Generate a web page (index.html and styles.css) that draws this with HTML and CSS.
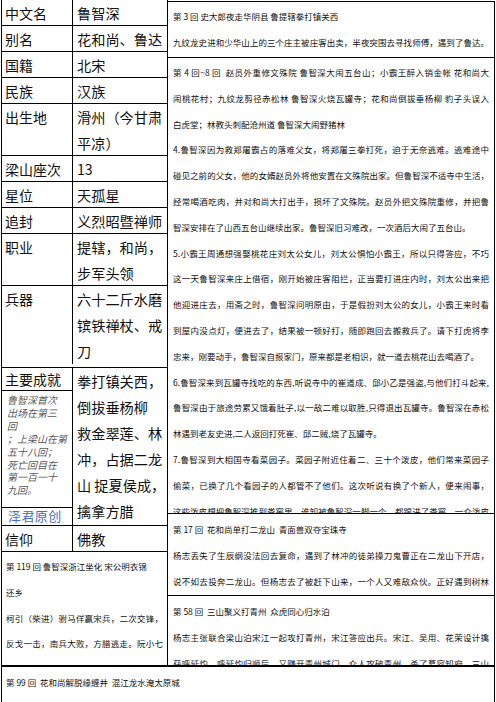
FILE: index.html
```html
<!DOCTYPE html>
<html lang="zh-CN">
<head>
<meta charset="utf-8">
<title>鲁智深</title>
<link rel="stylesheet" href="styles.css">
</head>
<body>
<div class="sheet">
  <div class="top">
    <div class="left">
      <div class="info">
        <div class="row"><div class="k">中文名</div><div class="v">鲁智深</div></div>
        <div class="row"><div class="k">别名</div><div class="v">花和尚、鲁达</div></div>
        <div class="row"><div class="k">国籍</div><div class="v">北宋</div></div>
        <div class="row"><div class="k">民族</div><div class="v">汉族</div></div>
        <div class="row"><div class="k">出生地</div><div class="v">滑州（今甘肃<br>平凉）</div></div>
        <div class="row"><div class="k">梁山座次</div><div class="v">13</div></div>
        <div class="row"><div class="k">星位</div><div class="v">天孤星</div></div>
        <div class="row"><div class="k">追封</div><div class="v">义烈昭暨禅师</div></div>
        <div class="row"><div class="k">职业</div><div class="v">提辖，和尚，<br>步军头领</div></div>
        <div class="row row-weapon"><div class="k">兵器</div><div class="v">六十二斤水磨<br>镔铁禅杖、戒<br>刀</div></div>
        <div class="row row-ach">
          <div class="k k-ach">
            <div class="ach-title">主要成就</div>
            <div class="note">鲁智深首次<br>出场在第三<br>回<br>；上梁山在第<br>五十八回；<br>死亡回目在<br>第一百一十<br>九回。</div>
            <div class="brand">泽君原创</div>
          </div>
          <div class="v">拳打镇关西，<br>倒拔垂杨柳<br>救金翠莲、林<br>冲，占据二龙<br>山 捉夏侯成，<br>擒拿方腊</div>
        </div>
        <div class="row"><div class="k">信仰</div><div class="v">佛教</div></div>
      </div>
      <div class="box box-f">
        <div class="ln">第 119 回 鲁智深浙江坐化 宋公明衣锦</div>
        <div class="ln">还乡</div>
        <div class="ln j">柯引（柴进）驸马佯赢宋兵，二次交锋，</div>
        <div class="ln j">反戈一击，南兵大败，方腊逃走。阮小七</div>
      </div>
    </div>
    <div class="right">
      <div class="box box-a">
        <div class="ln">第 3 回 史大郎夜走华阴县 鲁提辖拳打镇关西</div>
        <div class="ln j">九纹龙史进和少华山上的三个庄主被庄客出卖，半夜突围去寻找师傅，遇到了鲁达。</div>
      </div>
      <div class="box box-b">
        <div class="ln j">第 4 回~8 回&nbsp; 赵员外重修文殊院 鲁智深大闹五台山；小霸王醉入销金帐 花和尚大</div>
        <div class="ln j">闹桃花村；九纹龙剪径赤松林 鲁智深火烧瓦罐寺；花和尚倒拔垂杨柳 豹子头误入</div>
        <div class="ln">白虎堂；林教头刺配沧州道 鲁智深大闹野猪林</div>
        <div class="ln j">4.鲁智深因为救郑屠霸占的落难父女，将郑屠三拳打死，迫于无奈逃难。逃难途中</div>
        <div class="ln j">碰见之前的父女，他的女婿赵员外将他安置在文殊院出家。但鲁智深不适寺中生活，</div>
        <div class="ln j">经常喝酒吃肉，并对和尚大打出手，损坏了文殊院。赵员外把文殊院重修，并把鲁</div>
        <div class="ln">智深安排在了山西五台山继续出家。鲁智深旧习难改，一次酒后大闹了五台山。</div>
        <div class="ln j">5.小霸王周通想强娶桃花庄刘太公女儿，刘太公惧怕小霸王，所以只得答应，不巧</div>
        <div class="ln j">这一天鲁智深来庄上借宿，刚开始被庄客阻拦，正当要打进庄内时，刘太公出来把</div>
        <div class="ln j">他迎进庄去，用斋之时，鲁智深问明原由，于是假扮刘太公的女儿，小霸王来时看</div>
        <div class="ln j">到屋内没点灯，便进去了，结果被一顿好打，随即跑回去搬救兵了。请下打虎将李</div>
        <div class="ln">忠来，刚要动手，鲁智深自报家门，原来都是老相识，就一道去桃花山去喝酒了。</div>
        <div class="ln j">6.鲁智深来到瓦罐寺找吃的东西,听说寺中的崔道成、邱小乙是强盗,与他们打斗起来,</div>
        <div class="ln j">鲁智深由于旅途劳累又饿着肚子,以一敌二难以取胜,只得退出瓦罐寺。鲁智深在赤松</div>
        <div class="ln">林遇到老友史进,二人返回打死崔、邱二贼,烧了瓦罐寺。</div>
        <div class="ln j">7.鲁智深到大相国寺看菜园子。菜园子附近住着二、三十个泼皮，他们常来菜园子</div>
        <div class="ln j">偷菜，已换了几个看园子的人都管不了他们。这次听说有换了个新人，便来闹事，</div>
        <div class="ln j">这些泼皮想把鲁智深推到粪窖里，谁知被鲁智深一脚一个，都踢进了粪窖，一众泼皮</div>
      </div>
      <div class="box box-c">
        <div class="ln">第 17 回&nbsp; 花和尚单打二龙山&nbsp; 青面兽双夺宝珠寺</div>
        <div class="ln j">杨志丢失了生辰纲没法回去复命，遇到了林冲的徒弟操刀鬼曹正在二龙山下开店，</div>
        <div class="ln j">说不如去投奔二龙山。但杨志去了被赶下山来，一个人又难敌众伙。正好遇到树林</div>
      </div>
      <div class="box box-d">
        <div class="ln">第 58 回&nbsp; 三山聚义打青州&nbsp; 众虎同心归水泊</div>
        <div class="ln j">杨志主张联合梁山泊宋江一起攻打青州，宋江答应出兵。宋江、吴用、花荣设计擒</div>
        <div class="ln j">获呼延灼，呼延灼归顺后，又赚开青州城门，众人攻破青州，杀了慕容知府，三山</div>
      </div>
    </div>
  </div>
  <div class="box box-e">
    <div class="ln">第 99 回&nbsp; 花和尚解脱缘缠井&nbsp; 混江龙水淹太原城</div>
  </div>
</div>
</body>
</html>
```

FILE: styles.css
```css
* {
  box-sizing: border-box;
  margin: 0;
  padding: 0;
}

html,
body {
  background: #fff;
}

body {
  margin: 0;
  overflow: hidden;
  font-family: "Noto Sans CJK SC", "Noto Sans", sans-serif;
  color: #111;
}

.sheet {
  width: 494px;
  height: 702px;
  margin-left: 1px;
  overflow: hidden;
}

.top {
  display: flex;
  align-items: flex-start;
}

.left {
  width: 167px;
  flex: none;
}

.right {
  flex: 1;
  margin-left: -1px;
  margin-top: 1px;
}

/* ---------- info table ---------- */
.info {
  border-left: 1px solid #000;
  border-right: 1px solid #000;
}

.row {
  display: grid;
  grid-template-columns: 71px 1fr;
  font-size: 14px;
  line-height: 26px;
  box-shadow: inset 0 -1px 0 #000;
}

.k {
  border-right: 1px solid #000;
  padding-left: 3px;
  white-space: nowrap;
}

.v {
  padding-left: 4px;
  font-size: 14.2px;
  white-space: nowrap;
}

.row-weapon {
  padding-bottom: 4px;
}

.row-ach {
  height: 158px;
}

.k-ach {
  padding-left: 0;
}

.ach-title {
  padding-left: 3px;
  line-height: 22px;
}

.note {
  height: 118px;
  border-top: 1px solid #000;
  border-bottom: 1px solid #000;
  padding: 3px 0 0 5px;
  font-size: 10px;
  line-height: 12.9px;
  font-style: italic;
  color: #5a5a5a;
}

.brand {
  padding-left: 6px;
  font-size: 13px;
  line-height: 16px;
  letter-spacing: 0.4px;
  color: #4a6cc4;
}

/* ---------- text boxes ---------- */
.box {
  border-left: 1px solid #000;
  border-right: 1px solid #000;
  border-bottom: 1px solid #000;
  overflow: hidden;
  font-size: 8.5px;
  line-height: 25.8px;
  color: #111;
}

.ln {
  white-space: nowrap;
}

.ln.j {
  text-align: justify;
  text-align-last: justify;
}

.right .box {
  padding: 3px 5px 0 5px;
}

.right .box-a {
  height: 57px;
  border-top: 1px solid #000;
  padding-top: 2px;
}

.right .box-b {
  height: 456px;
  padding-top: 2px;
}

.box-c {
  height: 82px;
}

.box-d {
  height: 70px;
}

.box-f {
  height: 114px;
  padding: 2px 4px 0 4px;
}

.box-e {
  height: 40px;
  border-top: 1px solid #000;
  border-bottom: none;
  padding: 3px 4px 0 4px;
}
```
